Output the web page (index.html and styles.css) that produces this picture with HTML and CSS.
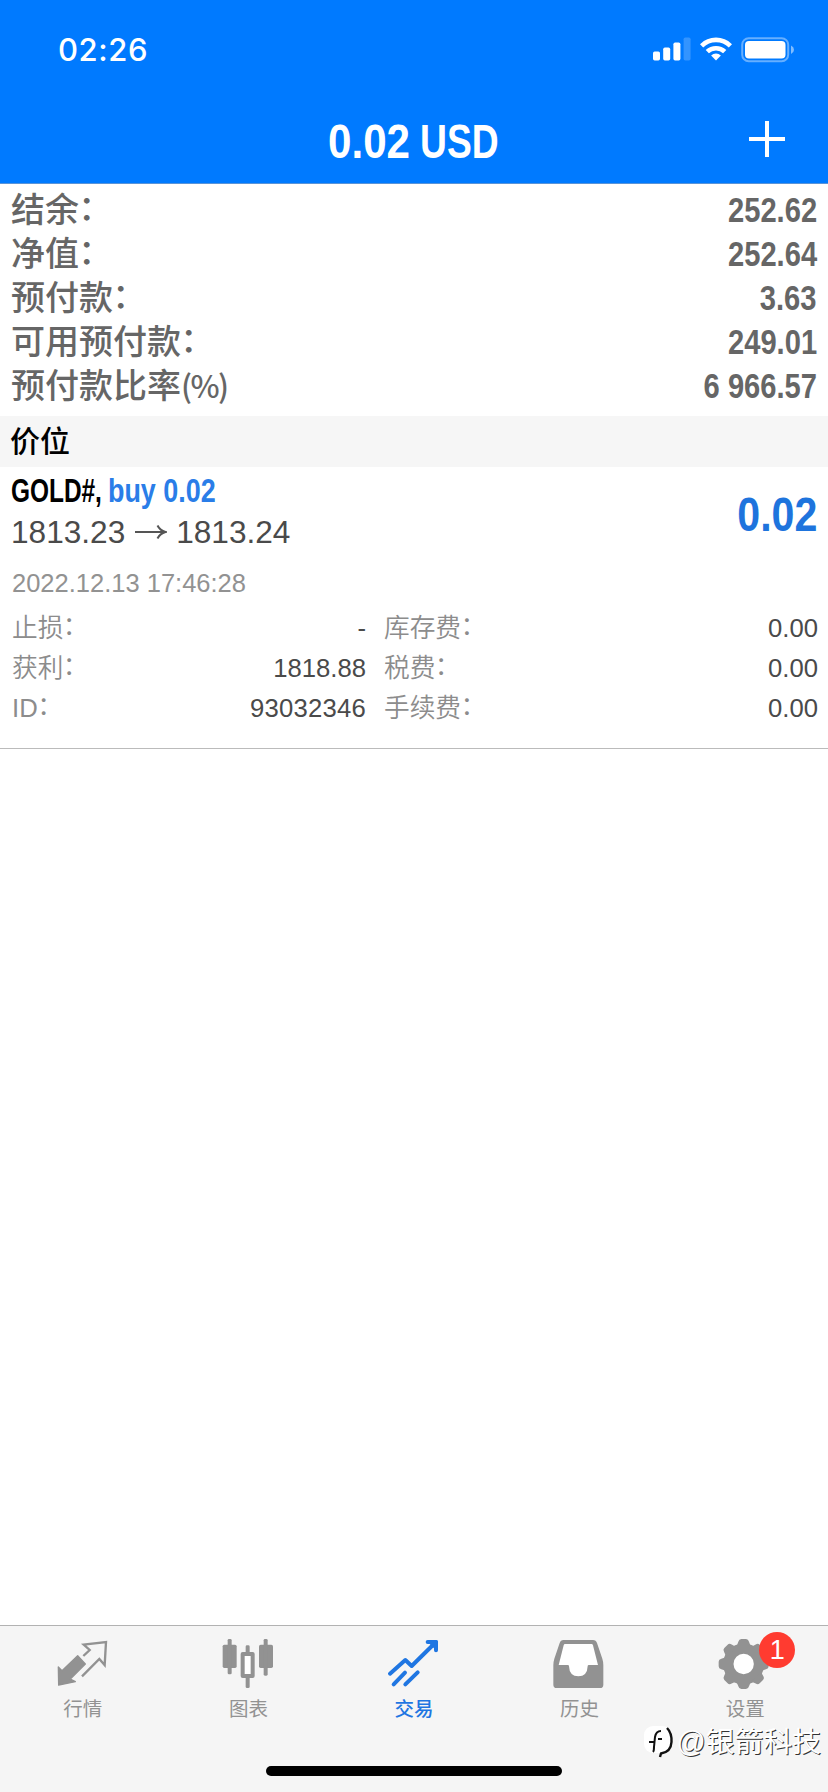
FILE: index.html
```html
<!DOCTYPE html>
<html lang="zh-CN">
<head>
<meta charset="utf-8">
<title>交易</title>
<link rel="stylesheet" href="styles.css">
</head>
<body>
<div class="app">
  <header class="header">
    <div class="status">
      <span class="clock">02:26</span>
      <div class="status-icons">
        <svg class="signal" viewBox="0 0 38 24"><g fill="#fff"><rect x="0" y="14.500" width="7" height="9" rx="1.700"/><rect x="10.200" y="10.500" width="7" height="13" rx="1.700"/><rect x="20.400" y="5.500" width="7" height="18" rx="1.700"/><rect x="30.600" y="0.500" width="7" height="23" rx="1.700" opacity=".2"/></g></svg>
        <svg class="wifi" viewBox="0 0 32 24"><g fill="none" stroke="#fff" stroke-width="4.600"><path d="M1.600 8.800a20.500 20.500 0 0 1 28.800 0"/><path d="M7.300 14.700a12.500 12.500 0 0 1 17.400 0"/></g><path d="M16 23.500l-4.900-5a7 7 0 0 1 9.800 0z" fill="#fff"/></svg>
        <svg class="battery" viewBox="0 0 54 26"><rect x="1.200" y="1.200" width="46" height="23" rx="6.500" fill="none" stroke="#fff" stroke-opacity=".4" stroke-width="2"/><rect x="4" y="4" width="40.500" height="17.500" rx="4" fill="#fff"/><path d="M50 8.500q3 1.500 3 4.200t-3 4.200z" fill="#fff" opacity=".5"/></svg>
      </div>
    </div>
    <div class="navbar">
      <h1 class="title"><span class="cond amount">0.02</span> <span class="cond unit">USD</span></h1>
      <svg class="plus" viewBox="0 0 36 36"><path d="M18 0V36M0 18H36" stroke="#fff" stroke-width="4"/></svg>
    </div>
  </header>

  <main class="content">
    <section class="summary">
      <div class="sum-row"><span>结余<i class="colon">：</i></span><span class="cond sum-val">252.62</span></div>
      <div class="sum-row"><span>净值<i class="colon">：</i></span><span class="cond sum-val">252.64</span></div>
      <div class="sum-row"><span>预付款<i class="colon">：</i></span><span class="cond sum-val">3.63</span></div>
      <div class="sum-row"><span>可用预付款<i class="colon">：</i></span><span class="cond sum-val">249.01</span></div>
      <div class="sum-row"><span>预付款比率<span class="pct">(%)</span></span><span class="cond sum-val">6 966.57</span></div>
    </section>
    <h2 class="section">价位</h2>
    <section class="position">
      <div class="pos-head">
        <div>
          <div class="symbol"><span class="cond name">GOLD#,</span><span class="cond side">buy 0.02</span></div>
          <div class="prices"><span>1813.23</span><svg class="arrow" viewBox="0 0 32 16"><path d="M0 8H30M22.500 1.500Q25 6.500 30.500 8Q25 9.500 22.500 14.500" fill="none" stroke="#555" stroke-width="2"/></svg><span>1813.24</span></div>
        </div>
        <div class="profit"><span class="cond">0.02</span></div>
      </div>
      <div class="date">2022.12.13 17:46:28</div>
      <div class="details">
        <div class="cell"><span class="key">止损<i class="colon">：</i></span><span>-</span></div>
        <div class="cell"><span class="key">库存费<i class="colon">：</i></span><span>0.00</span></div>
        <div class="cell"><span class="key">获利<i class="colon">：</i></span><span>1818.88</span></div>
        <div class="cell"><span class="key">税费<i class="colon">：</i></span><span>0.00</span></div>
        <div class="cell"><span class="key">ID<i class="colon">：</i></span><span class="ticket">93032346</span></div>
        <div class="cell"><span class="key">手续费<i class="colon">：</i></span><span>0.00</span></div>
      </div>
    </section>
  </main>

  <footer class="tabbar">
    <nav class="tabs">
      <div class="tab">
        <svg class="icon" viewBox="0 0 168 168"><path d="M68 59L91 84L46 129L61 137L11 147L10 93L21 104Z" fill="currentColor" stroke="currentColor" stroke-width="4" stroke-linejoin="round"/><path d="M85 60L104 42L86 26L153 18L149 87L133 69L81 121" fill="none" stroke="currentColor" stroke-width="7"/></svg>
        <span>行情</span>
      </div>
      <div class="tab">
        <svg class="icon" viewBox="0 0 168 168"><g fill="currentColor"><rect x="8" y="26" width="42" height="70" rx="5"/><rect x="23" y="9" width="12" height="106" rx="4"/><rect x="117" y="26" width="42" height="70" rx="5"/><rect x="131" y="9" width="12" height="110" rx="4"/><rect x="77" y="28" width="12" height="26" rx="4"/><rect x="77" y="120" width="12" height="36" rx="4"/></g><rect x="68" y="54" width="30" height="66" fill="#fff" stroke="currentColor" stroke-width="12" stroke-linejoin="round"/></svg>
        <span>图表</span>
      </div>
      <div class="tab active">
        <svg class="icon" viewBox="0 0 168 168"><g fill="none" stroke="currentColor" stroke-width="12" stroke-linecap="round" stroke-linejoin="round"><path d="M12 113L58 72L77 90L150 18"/><path d="M125 18H150V43"/><path d="M23 145L57 110M58 145L95 109"/></g><path d="M125 18H150V43Z" fill="currentColor"/></svg>
        <span>交易</span>
      </div>
      <div class="tab">
        <svg class="icon" viewBox="0 0 168 168"><path d="M35 24H121L138 87H107Q107 121 79 121Q51 121 51 87H20Z" fill="#fff"/><path fill-rule="evenodd" d="M34 12H123Q132 12 135 21L151 68Q154 77 154 88V146Q154 156 144 156H14Q4 156 4 146V88Q4 77 7 68L23 21Q26 12 34 12ZM39 24Q36 24 35 28L20 87H47Q51 87 51 91Q52 121 79 121Q106 121 107 91Q107 87 111 87H138L123 28Q122 24 119 24Z" fill="currentColor"/></svg>
        <span>历史</span>
      </div>
      <div class="tab">
        <svg class="icon" viewBox="0 0 168 168"><g transform="translate(80 84)"><circle r="46" fill="#fff" stroke="currentColor" stroke-width="31"/><g fill="currentColor"><path id="tooth" d="M-25-52Q-18-57-16-67Q-14-75-7-75H7Q14-75 16-67Q18-57 25-52Z"/><use href="#tooth" transform="rotate(45)"/><use href="#tooth" transform="rotate(90)"/><use href="#tooth" transform="rotate(135)"/><use href="#tooth" transform="rotate(180)"/><use href="#tooth" transform="rotate(225)"/><use href="#tooth" transform="rotate(270)"/><use href="#tooth" transform="rotate(315)"/></g></g></svg>
        <span>设置</span>
        <i class="badge">1</i>
      </div>
    </nav>
    <div class="home"></div>
    <div class="watermark">
      <svg class="mark" viewBox="0 0 34 36"><rect x="1" y="2" width="28" height="27" rx="9" fill="#fff"/><path d="M6 18H12M10 28Q11 27 11 23L12 13Q13 7 18 7M15 15H19" fill="none" stroke="#111" stroke-width="2"/><path d="M24 4Q29 9 28.500 18Q28 28 18 29.500L17 33" fill="none" stroke="#111" stroke-width="2.400"/></svg>
      <span>@银箭科技</span>
    </div>
  </footer>
</div>
</body>
</html>
```
FILE: styles.css
```css
* { box-sizing: border-box; }
body {
  margin: 0;
  background: #fff;
  font-family: "Liberation Sans", "Noto Sans CJK SC", sans-serif;
  color: #4a4a4a;
}
.app { display: flex; flex-direction: column; width: 828px; height: 1792px; overflow: hidden; }

/* Condensed bold lettering */
.cond { display: inline-block; transform: scaleX(.84); transform-origin: left; white-space: pre; }
.colon { display: inline-block; font-style: normal; transform: translate(-.02em, -.07em); }

.header { height: 184px; background: #007aff; color: #fff; border-bottom: 1px solid #5a94d8; }
.status { display: flex; justify-content: space-between; height: 100px; padding: 0 33px 0 58px; }
.clock { font: 500 31px/100px Inter, sans-serif; letter-spacing: .6px; }
.status-icons { display: flex; padding-top: 37px; }
.signal { width: 38px; height: 24px; margin-right: 9px; }
.wifi { width: 32px; height: 24px; margin-right: 9px; }
.battery { width: 54px; height: 26px; }
.navbar { display: grid; grid-template-columns: 328px 171px 1fr; align-items: center; height: 83px; padding-right: 43px; }
.title { grid-column: 2; display: flex; justify-content: space-between; margin: 0; font-size: 49px; line-height: 81px; font-weight: 700; }
.title .amount { width: 90px; transform: scaleX(.86); }
.title .unit { width: 79px; transform: scaleX(.76); }
.plus { grid-column: 3; justify-self: end; width: 36px; height: 36px; margin-top: -5px; }

.content { flex: 1; }
.summary { padding: 4px 11px 8px; color: #666; }
.sum-row { display: flex; justify-content: space-between; height: 44px; font-size: 34px; line-height: 45px; font-weight: 500; }
.sum-val { font-size: 34.7px; font-weight: 700; transform-origin: right; }
.pct { font-family: "Noto Sans CJK SC", sans-serif; font-size: 31px; line-height: 1; font-weight: 500; letter-spacing: -1.6px; }
.section { margin: 0; height: 51px; padding-left: 10px; background: #f6f6f6; color: #000; font-size: 30px; line-height: 52px; font-weight: 500; }

.position { height: 282px; border-bottom: 1px solid #bbb; }
.pos-head { display: flex; justify-content: space-between; padding: 4px 11px 0; height: 90px; }
.symbol { display: flex; height: 42px; font-size: 33px; line-height: 40px; font-weight: 700; color: #000; }
.symbol .name { width: 97px; transform: scaleX(.74); }
.symbol .side { transform: scaleX(.815); color: #2a7de8; }
.prices { display: flex; align-items: center; height: 38px; font-size: 31.6px; line-height: 38px; }
.arrow { width: 32px; height: 16px; margin: 0 9px 0 10px; }
.profit { padding-top: 13px; font-size: 49px; line-height: 60px; font-weight: 700; color: #1e74dd; }
.profit .cond { transform-origin: right; }
.date { height: 51px; padding-left: 12px; font-size: 25.5px; line-height: 52px; color: #929292; }
.details { display: grid; grid-template-columns: 354px 434px; column-gap: 18px; padding-left: 12px; font-size: 25.7px; line-height: 40px; }
.cell { display: flex; justify-content: space-between; height: 40px; }
.key { color: #8c8c8c; font-weight: 350; }
.ticket { letter-spacing: .2px; }

.tabbar { position: relative; height: 167px; background: #f5f5f5; border-top: 1px solid #b2b2b2; }
.tabs { display: flex; height: 140px; }
.tab { position: relative; flex: 1; display: flex; flex-direction: column; align-items: center; padding-top: 10px; color: #929292; font-size: 19.5px; line-height: 34px; }
.active { color: #1f76e2; font-weight: 500; }
.icon { width: 56px; height: 56px; }
.badge { position: absolute; left: 97px; top: 6px; width: 36px; height: 36px; border-radius: 50%; background: #ff3b30; color: #fff; font-style: normal; font-size: 27px; line-height: 36px; text-align: center; }
.home { width: 296px; height: 10px; margin: 0 auto; border-radius: 5px; background: #000; }
.watermark { position: absolute; right: 7px; top: 96px; display: flex; align-items: center; color: #fff; font-size: 28.8px; line-height: 40px; text-shadow: 1px 1px 0 #333; }
.mark { width: 34px; height: 36px; }
```
